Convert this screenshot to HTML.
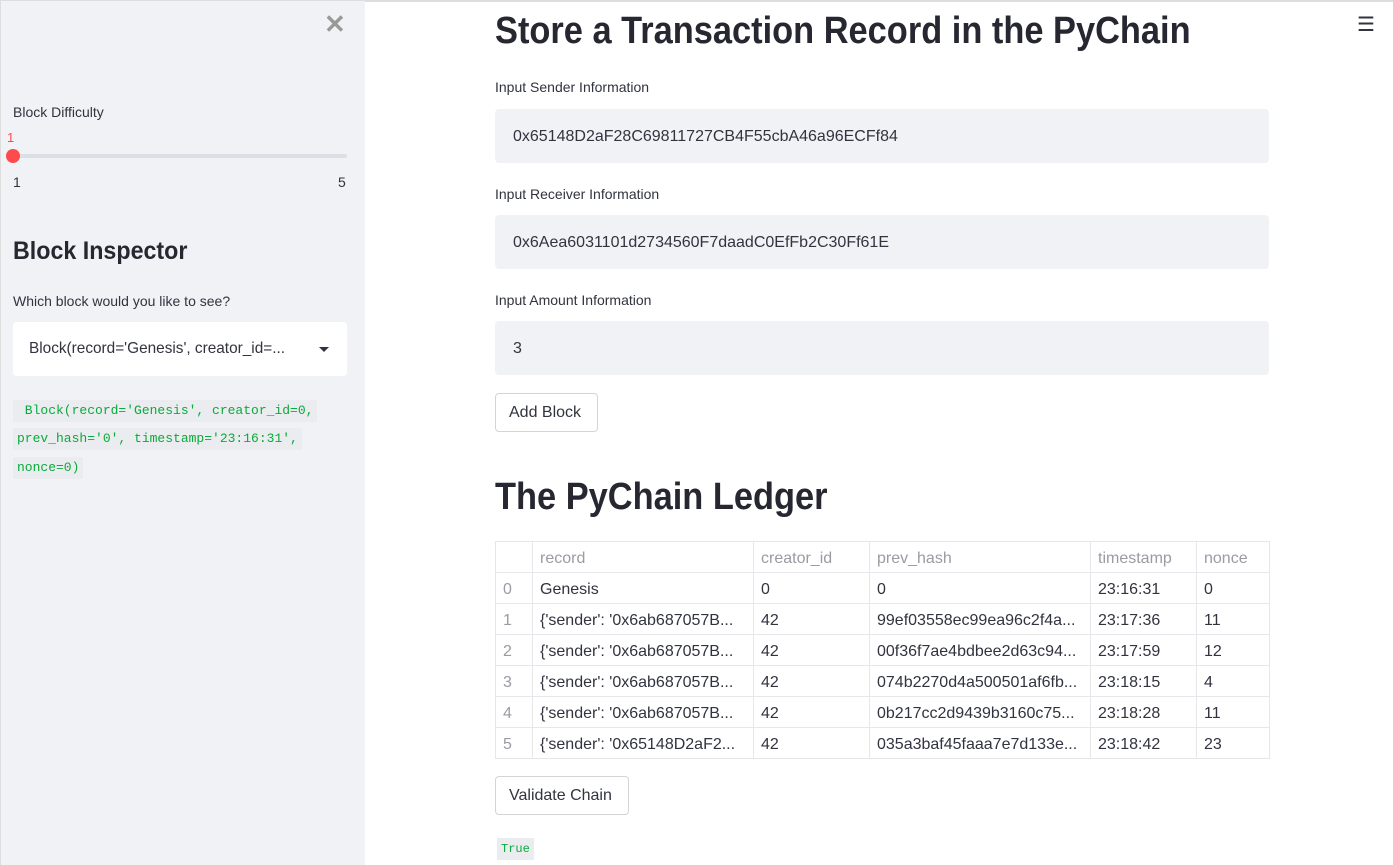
<!DOCTYPE html>
<html><head><meta charset="utf-8"><style>
*{margin:0;padding:0;box-sizing:border-box}
body{width:1393px;height:865px;overflow:hidden;background:#fff;font-family:"Liberation Sans",sans-serif;color:#262730;position:relative}
.a{position:absolute;white-space:nowrap}
.n{display:inline-block;transform-origin:0 50%}
#sb{position:absolute;left:0;top:0;width:365px;height:865px;background:#f0f2f6;border-left:1px solid #ddd;border-top:1px solid #ddd}
.lbl{font-size:14px;color:#31333f}
.inp{position:absolute;left:495px;width:774px;height:54px;background:#f0f2f6;border-radius:4px}
.inp .t{position:absolute;left:18px;top:19px;font-size:16px;color:#31333f;white-space:nowrap}
.btn{position:absolute;left:495px;border:1px solid #d3d4d8;border-radius:4px;background:#fff;font-size:16px;color:#31333f}
table{position:absolute;left:495px;top:541px;border-collapse:collapse;font-size:16px;color:#31333f}
td{border:1px solid #e6e7ea;height:31px;padding:3px 0 0 7px;white-space:nowrap;overflow:hidden}
tr.h td{color:#9a9ba3}
td.i{color:#9a9ba3;padding-left:7px}
.code{position:absolute;left:12px;font-family:"Liberation Mono",monospace;font-size:13px;color:#09ab3b;background:#eaecef;padding:1px 4px;line-height:20px}
</style></head><body>
<div style="position:absolute;left:0;top:0;width:1393px;height:2px;background:#ddd"></div>
<div id="sb">
<div class="a" style="left:323px;top:8px;font-size:26px;color:#999;font-weight:bold">✕</div>
<div class="a lbl" style="left:12px;top:103px">Block Difficulty</div>
<div class="a" style="left:6px;top:129px;font-size:13px;color:#ff4b4b">1</div>
<div style="position:absolute;left:12px;top:153px;width:334px;height:4px;background:#dcdfe6;border-radius:2px"></div>
<div style="position:absolute;left:5px;top:148px;width:14px;height:14px;border-radius:50%;background:#ff4b4b"></div>
<div class="a" style="left:12px;top:173px;font-size:14px;color:#31333f">1</div>
<div class="a" style="left:337px;top:173px;font-size:14px;color:#31333f">5</div>
<div class="a" style="left:12px;top:236px;font-size:25px;font-weight:bold"><span class="n" style="transform:scaleX(.93)">Block Inspector</span></div>
<div class="a lbl" style="left:12px;top:292px">Which block would you like to see?</div>
<div style="position:absolute;left:12px;top:321px;width:334px;height:54px;background:#fff;border-radius:4px"></div>
<div class="a" style="left:28px;top:339px;font-size:16px;color:#31333f"><span class="n" style="transform:scaleX(.96)">Block(record='Genesis', creator_id=...</span></div>
<div class="a" style="left:318px;top:346px;width:0;height:0;border-left:5px solid transparent;border-right:5px solid transparent;border-top:5px solid #31333f"></div>
<div class="code" style="top:399px;left:12px">&nbsp;Block(record='Genesis', creator_id=0,</div>
<div class="code" style="top:427px;left:12px">prev_hash='0', timestamp='23:16:31',</div>
<div class="code" style="top:456px;left:12px">nonce=0)</div>
</div>
<div class="a" style="left:1357px;top:12px;font-size:20px;color:#31333f">☰</div>
<div class="a" style="left:495px;top:10px;font-size:38px;font-weight:bold;color:#262730"><span class="n" style="transform:scaleX(.905)">Store a Transaction Record in the PyChain</span></div>
<div class="a lbl" style="left:495px;top:79px">Input Sender Information</div>
<div class="inp" style="top:109px"><div class="t">0x65148D2aF28C69811727CB4F55cbA46a96ECFf84</div></div>
<div class="a lbl" style="left:495px;top:186px">Input Receiver Information</div>
<div class="inp" style="top:215px"><div class="t">0x6Aea6031101d2734560F7daadC0EfFb2C30Ff61E</div></div>
<div class="a lbl" style="left:495px;top:292px">Input Amount Information</div>
<div class="inp" style="top:321px"><div class="t">3</div></div>
<div class="btn" style="top:393px;width:103px;height:39px"><span class="a" style="left:13px;top:10px">Add Block</span></div>
<div class="a" style="left:495px;top:476px;font-size:38px;font-weight:bold;color:#262730"><span class="n" style="transform:scaleX(.905)">The PyChain Ledger</span></div>
<table>
<colgroup><col style="width:37px"><col style="width:221px"><col style="width:116px"><col style="width:221px"><col style="width:106px"><col style="width:73px"></colgroup>
<tr class="h"><td></td><td>record</td><td>creator_id</td><td>prev_hash</td><td>timestamp</td><td>nonce</td></tr>
<tr><td class="i">0</td><td>Genesis</td><td>0</td><td>0</td><td>23:16:31</td><td>0</td></tr>
<tr><td class="i">1</td><td>{'sender': '0x6ab687057B...</td><td>42</td><td>99ef03558ec99ea96c2f4a...</td><td>23:17:36</td><td>11</td></tr>
<tr><td class="i">2</td><td>{'sender': '0x6ab687057B...</td><td>42</td><td>00f36f7ae4bdbee2d63c94...</td><td>23:17:59</td><td>12</td></tr>
<tr><td class="i">3</td><td>{'sender': '0x6ab687057B...</td><td>42</td><td>074b2270d4a500501af6fb...</td><td>23:18:15</td><td>4</td></tr>
<tr><td class="i">4</td><td>{'sender': '0x6ab687057B...</td><td>42</td><td>0b217cc2d9439b3160c75...</td><td>23:18:28</td><td>11</td></tr>
<tr><td class="i">5</td><td>{'sender': '0x65148D2aF2...</td><td>42</td><td>035a3baf45faaa7e7d133e...</td><td>23:18:42</td><td>23</td></tr>
</table>
<div class="btn" style="top:776px;width:134px;height:39px"><span class="a" style="left:13px;top:10px">Validate Chain</span></div>
<div class="code" style="left:497px;top:838px;font-size:12px">True</div>
</body></html>
